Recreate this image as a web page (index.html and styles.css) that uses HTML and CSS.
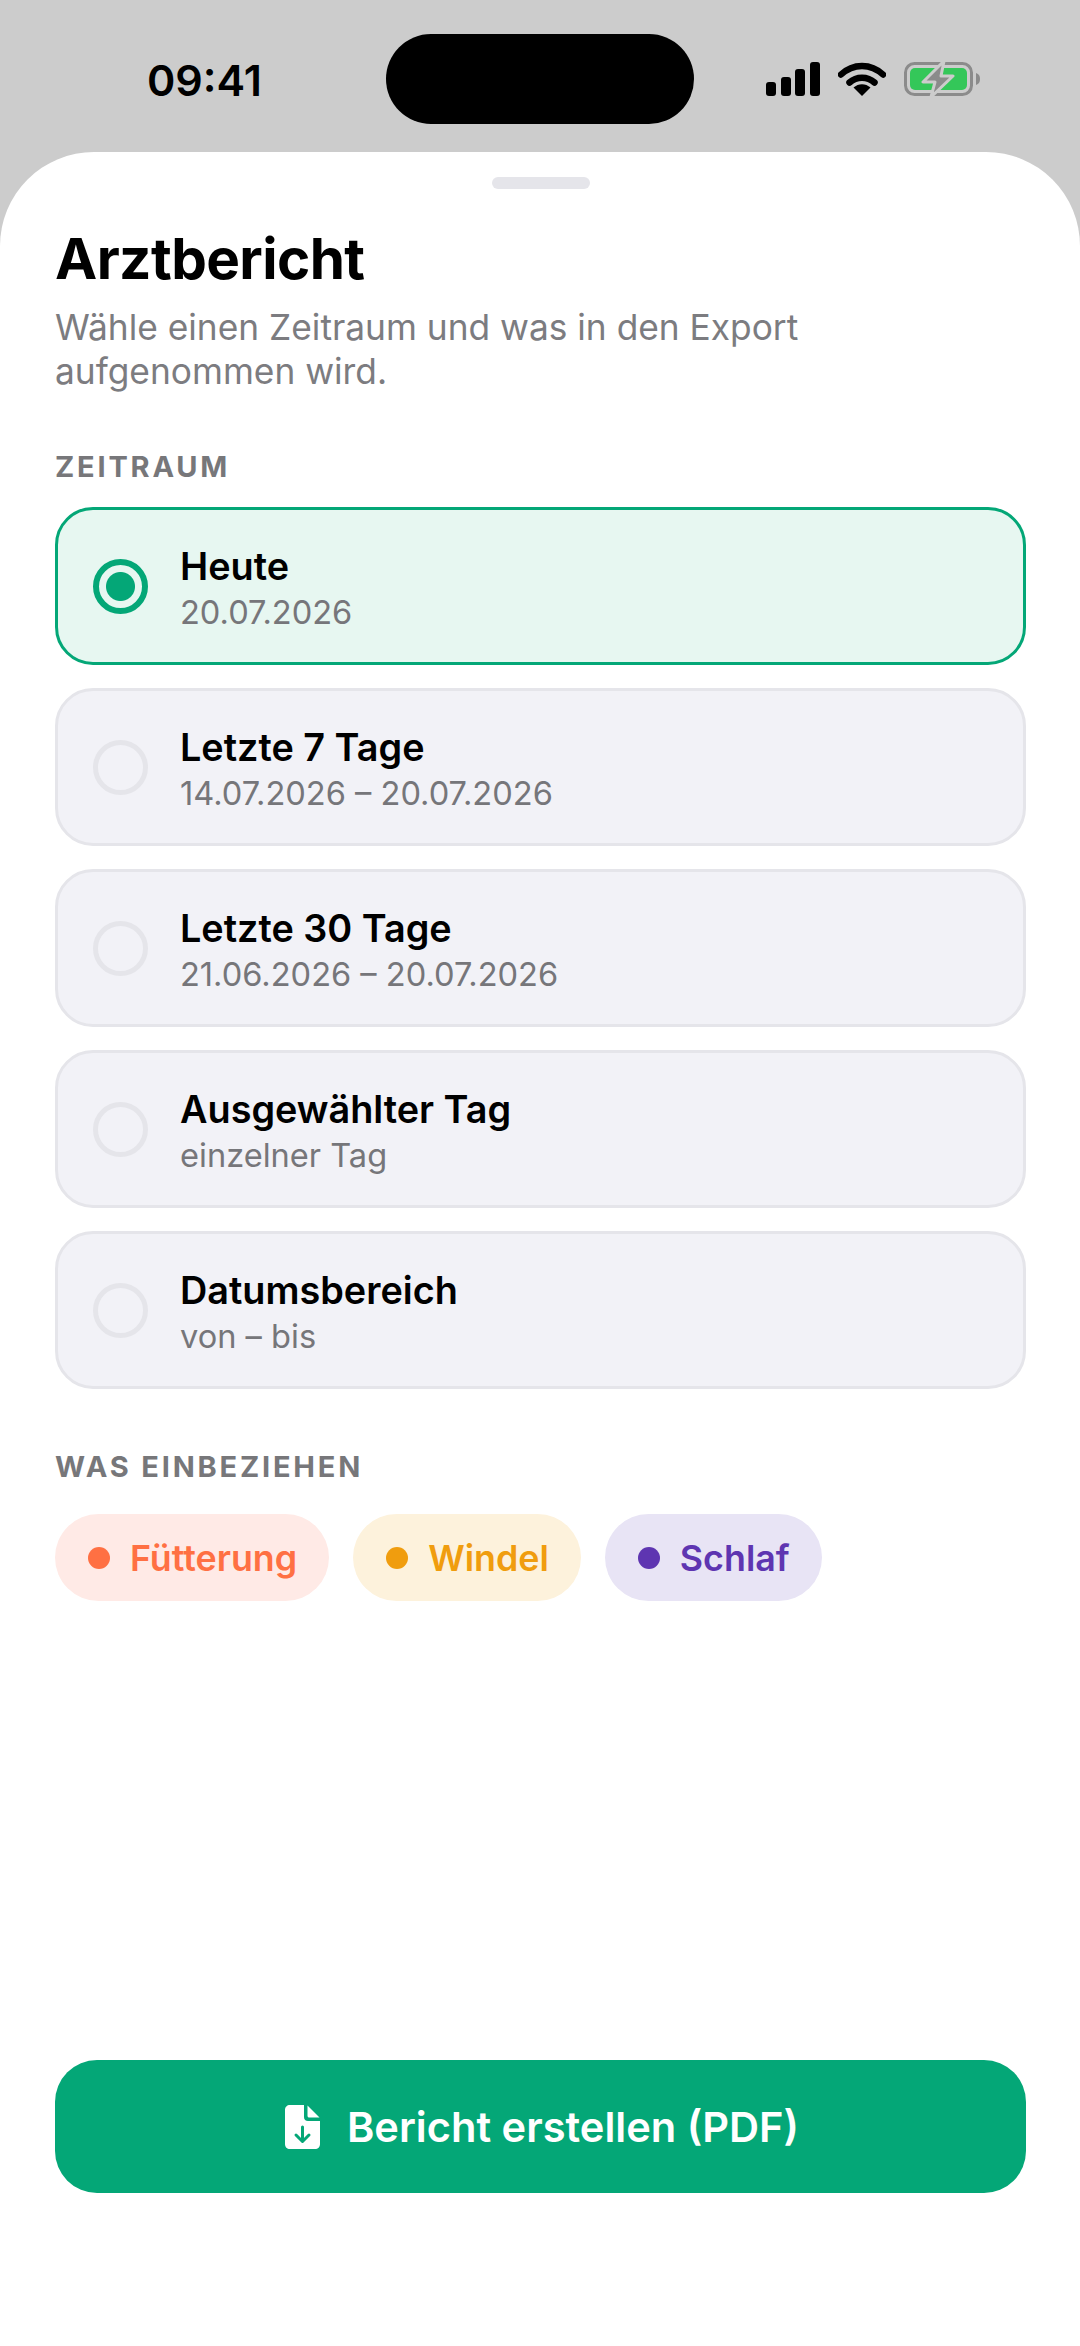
FILE: index.html

```html
<!DOCTYPE html>
<html lang="de">
<head>
    <meta charset="UTF-8">
    <meta name="viewport" content="width=device-width, initial-scale=1.0">
    <title>Arztbericht</title>
    <link rel="stylesheet" href="styles.css">
</head>
<body>
    <header class="statusBar">
        <span class="time">09:41</span>
        <div class="island"></div>
        <div class="statusIcons">
            <svg class="signal" width="54" height="34" viewBox="0 0 54 34" fill="#000">
                <rect x="0" y="20" width="10" height="14" rx="3"/>
                <rect x="15" y="15" width="10" height="19" rx="3"/>
                <rect x="29" y="7" width="10" height="27" rx="3"/>
                <rect x="44" y="0" width="10" height="34" rx="3"/>
            </svg>
            <svg class="wifi" width="48" height="34" viewBox="0 0 48 34">
                <path d="M3 12.5 C15 1 33 1 45 12.5" fill="none" stroke="#000" stroke-width="6.5" stroke-linecap="round"/>
                <path d="M11.5 20.5 C18.5 14 29.5 14 36.5 20.5" fill="none" stroke="#000" stroke-width="6.5" stroke-linecap="round"/>
                <path d="M15.5 25.5 C20.5 21 27.5 21 32.5 25.5 L24 34 Z" fill="#000"/>
            </svg>
            <svg class="battery" width="76" height="34" viewBox="0 0 76 34">
                <rect x="1.5" y="1.5" width="66" height="31" rx="9" fill="none" stroke="#8b8b8b" stroke-width="3"/>
                <rect x="6" y="6" width="57" height="22" rx="5" fill="#34c759"/>
                <path d="M72 11 C75 12 76 14 76 17 C76 20 75 22 72 23 Z" fill="#8b8b8b"/>
                <path d="M40 -1 L19 20 H31 L27 35 L49 14 H37 Z" fill="#8b8b8b" stroke="#cccccc" stroke-width="3" stroke-linejoin="round"/>
            </svg>
        </div>
    </header>

    <main class="sheet">
        <div class="handle"></div>
        <h1 class="title">Arztbericht</h1>
        <p class="intro">Wähle einen Zeitraum und was in den Export aufgenommen wird.</p>

        <h2 class="sectionLabel">ZEITRAUM</h2>
        <div class="options">
            <div class="option selected">
                <span class="radio"></span>
                <div class="optionText">
                    <div class="optionTitle">Heute</div>
                    <div class="optionSub">20.07.2026</div>
                </div>
            </div>
            <div class="option">
                <span class="radio"></span>
                <div class="optionText">
                    <div class="optionTitle">Letzte 7 Tage</div>
                    <div class="optionSub">14.07.2026 – 20.07.2026</div>
                </div>
            </div>
            <div class="option">
                <span class="radio"></span>
                <div class="optionText">
                    <div class="optionTitle">Letzte 30 Tage</div>
                    <div class="optionSub">21.06.2026 – 20.07.2026</div>
                </div>
            </div>
            <div class="option">
                <span class="radio"></span>
                <div class="optionText">
                    <div class="optionTitle">Ausgewählter Tag</div>
                    <div class="optionSub">einzelner Tag</div>
                </div>
            </div>
            <div class="option">
                <span class="radio"></span>
                <div class="optionText">
                    <div class="optionTitle">Datumsbereich</div>
                    <div class="optionSub">von – bis</div>
                </div>
            </div>
        </div>

        <h2 class="sectionLabel includeLabel">WAS EINBEZIEHEN</h2>
        <div class="chips">
            <div class="chip feeding"><span class="dot"></span>Fütterung</div>
            <div class="chip diaper"><span class="dot"></span>Windel</div>
            <div class="chip sleep"><span class="dot"></span>Schlaf</div>
        </div>

        <button type="button" class="exportBtn">
            <svg width="35" height="44" viewBox="0 0 35 44">
                <path d="M5 0 H19 V12 C19 14.5 20.5 16 23 16 H35 V39 C35 42 33 44 30 44 H5 C2 44 0 42 0 39 V5 C0 2 2 0 5 0 Z" fill="#fff"/>
                <path d="M22.5 0.5 L34.5 12.5 H24.5 C23 12.5 22.5 12 22.5 10.5 Z" fill="#fff"/>
                <path d="M17.5 22 V36 M11 30 L17.5 36.5 L24 30" fill="none" stroke="#04a777" stroke-width="3" stroke-linecap="round" stroke-linejoin="round"/>
            </svg>
            Bericht erstellen (PDF)
        </button>
    </main>
</body>
</html>
```

FILE: styles.css

```css
* {
    margin: 0;
    padding: 0;
    box-sizing: border-box;
}

body {
    width: 1080px;
    height: 2346px;
    overflow: hidden;
    display: flex;
    flex-direction: column;
    font-family: Inter, "Liberation Sans", sans-serif;
    background-color: #cccccc;
    color: #000;
}

/* Status bar */
.statusBar {
    height: 152px;
    flex-shrink: 0;
    display: grid;
    grid-template-columns: 1fr 308px 1fr;
    align-items: start;
    padding-top: 34px;
}

.time {
    padding-left: 147px;
    margin-top: 20px;
    font-size: 43px;
    line-height: 52px;
    font-weight: 600;
}

.island {
    height: 90px;
    border-radius: 45px;
    background-color: #000;
}

.statusIcons {
    display: flex;
    justify-content: flex-end;
    align-items: center;
    gap: 18px;
    padding-right: 100px;
    margin-top: 28px;
}

/* Sheet */
.sheet {
    flex: 1;
    display: flex;
    flex-direction: column;
    padding: 25px 54px 153px 55px;
    background-color: #fff;
    border-radius: 94px 94px 0 0;
}

.handle {
    width: 98px;
    height: 12px;
    margin: 0 auto 37px;
    border-radius: 6px;
    background-color: #e5e5ea;
}

.title {
    font-size: 56.6px;
    line-height: 66px;
    font-weight: 700;
    letter-spacing: -0.6px;
}

.intro {
    margin-top: 14px;
    width: 810px;
    font-size: 35.3px;
    line-height: 44px;
    color: #7c7c80;
}

.sectionLabel {
    margin-top: 55px;
    font-size: 29px;
    line-height: 36px;
    font-weight: 700;
    letter-spacing: 2.8px;
    color: #77777a;
}

.includeLabel {
    margin-top: 60px;
}

/* Options */
.options {
    display: flex;
    flex-direction: column;
    gap: 23px;
    margin-top: 22px;
}

.option {
    height: 158px;
    display: flex;
    align-items: center;
    gap: 32px;
    padding-left: 35px;
    background-color: #f2f2f7;
    border: 3px solid #e5e5ea;
    border-radius: 38px;
}

.option.selected {
    background-color: #e7f7f1;
    border-color: #04a777;
}

.radio {
    width: 55px;
    height: 55px;
    flex-shrink: 0;
    border: 5px solid #e5e5ea;
    border-radius: 50%;
}

.selected .radio {
    border: 6px solid #04a777;
    background: radial-gradient(circle, #04a777 14px, transparent 15px);
}

.optionText {
    padding-top: 3px;
}

.optionTitle {
    font-size: 37.8px;
    line-height: 46px;
    font-weight: 600;
}

.optionSub {
    margin-top: 2px;
    font-size: 32.6px;
    line-height: 42px;
    color: #76767a;
}

/* Chips */
.chips {
    display: flex;
    gap: 24px;
    margin-top: 29px;
}

.chip {
    height: 87px;
    display: flex;
    align-items: center;
    gap: 20px;
    padding: 0 32px 0 33px;
    border-radius: 44px;
    font-size: 35.8px;
    font-weight: 560;
}

.dot {
    width: 22px;
    height: 22px;
    border-radius: 50%;
    background-color: currentColor;
}

.feeding {
    color: #ff7043;
    background-color: #ffeae6;
}

.diaper {
    color: #f09d0e;
    background-color: #fdf2dc;
}

.sleep {
    color: #5e35b1;
    background-color: #e8e4f5;
}

/* Export button */
.exportBtn {
    margin-top: auto;
    height: 133px;
    display: flex;
    align-items: center;
    justify-content: center;
    gap: 27px;
    padding-left: 3px;
    border: none;
    border-radius: 42px;
    background-color: #04a777;
    color: #fff;
    font-family: inherit;
    font-size: 41.6px;
    font-weight: 600;
}
```
